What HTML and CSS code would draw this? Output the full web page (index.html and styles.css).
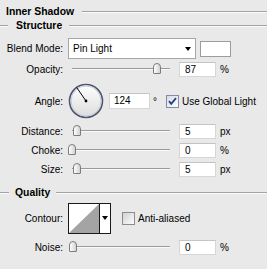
FILE: index.html
```html
<!DOCTYPE html>
<html lang="en">
<head>
    <meta charset="UTF-8">
    <meta name="viewport" content="width=device-width, initial-scale=1.0">
    <title>Inner Shadow</title>
    <link rel="stylesheet" href="styles.css">
</head>
<body>

    <div class="panel">
        <!-- Judul -->
        <div class="group-title">
            <span class="title-text">Inner Shadow</span>
            <span class="rule"></span>
        </div>

        <!-- Structure -->
        <div class="section-title">
            <span class="rule lead"></span>
            <span class="title-text">Structure</span>
            <span class="rule"></span>
        </div>

        <div class="row row-blend">
            <label class="lbl">Blend Mode:</label>
            <div class="select">Pin Light<span class="arrow"></span></div>
            <span class="swatch"></span>
        </div>

        <div class="row row-slider row-opacity">
            <label class="lbl">Opacity:</label>
            <div class="slider"><span class="track"></span><span class="thumb" style="left:85px"></span></div>
            <div class="num">87</div>
            <span class="unit">%</span>
        </div>

        <div class="row row-angle">
            <label class="lbl">Angle:</label>
            <svg class="dial" width="36" height="36" viewBox="0 0 36 36">
                <defs>
                    <linearGradient id="dialFill" x1="0" y1="0" x2="0" y2="1">
                        <stop offset="0" stop-color="#ffffff"/>
                        <stop offset="1" stop-color="#dcdcdc"/>
                    </linearGradient>
                </defs>
                <circle cx="18" cy="18" r="16.5" fill="url(#dialFill)" stroke="#4d5670" stroke-width="1.6"/>
                <circle cx="18" cy="18" r="15" fill="none" stroke="#c9ccd6" stroke-width="1"/>
                <line x1="18" y1="18" x2="8.6" y2="4.4" stroke="#000" stroke-width="1"/>
                <circle cx="18" cy="18" r="1.4" fill="#000"/>
            </svg>
            <div class="num num-angle">124</div>
            <span class="deg">°</span>
            <span class="check checked">
                <svg width="13" height="13" viewBox="0 0 13 13">
                    <defs>
                        <linearGradient id="boxFill" x1="0" y1="0" x2="1" y2="1">
                            <stop offset="0" stop-color="#d6d9e2"/>
                            <stop offset="1" stop-color="#ffffff"/>
                        </linearGradient>
                    </defs>
                    <rect x="0.5" y="0.5" width="12" height="12" fill="url(#boxFill)" stroke="#7f8ca8"/>
                    <path d="M3 6.2 L5.2 8.8 L10 3.2" fill="none" stroke="#263f86" stroke-width="1.8"/>
                </svg>
            </span>
            <span class="check-text">Use Global Light</span>
        </div>

        <div class="row row-slider row-distance">
            <label class="lbl">Distance:</label>
            <div class="slider"><span class="track"></span><span class="thumb" style="left:5px"></span></div>
            <div class="num">5</div>
            <span class="unit">px</span>
        </div>

        <div class="row row-slider row-gap">
            <label class="lbl">Choke:</label>
            <div class="slider"><span class="track"></span><span class="thumb" style="left:0px"></span></div>
            <div class="num">0</div>
            <span class="unit">%</span>
        </div>

        <div class="row row-slider row-gap">
            <label class="lbl">Size:</label>
            <div class="slider"><span class="track"></span><span class="thumb" style="left:5px"></span></div>
            <div class="num">5</div>
            <span class="unit">px</span>
        </div>

        <div class="divider"></div>

        <!-- Quality -->
        <div class="section-title section-quality">
            <span class="rule lead"></span>
            <span class="title-text">Quality</span>
            <span class="rule"></span>
        </div>

        <div class="row row-contour">
            <label class="lbl">Contour:</label>
            <div class="contour">
                <svg class="curve" width="30" height="29" viewBox="0 0 30 29">
                    <rect width="30" height="29" fill="#ffffff"/>
                    <polygon points="0,29 30,0 30,29" fill="#a4a4a4"/>
                </svg>
                <span class="contour-drop"><span class="arrow"></span></span>
            </div>
            <span class="check">
                <svg width="13" height="13" viewBox="0 0 13 13">
                    <defs>
                        <linearGradient id="boxFill2" x1="0" y1="0" x2="1" y2="1">
                            <stop offset="0" stop-color="#cfcfcf"/>
                            <stop offset="1" stop-color="#ffffff"/>
                        </linearGradient>
                    </defs>
                    <rect x="0.5" y="0.5" width="12" height="12" fill="url(#boxFill2)" stroke="#8c8c8c"/>
                </svg>
            </span>
            <span class="check-text">Anti-aliased</span>
        </div>

        <div class="row row-slider row-noise">
            <label class="lbl">Noise:</label>
            <div class="slider"><span class="track"></span><span class="thumb" style="left:1px"></span></div>
            <div class="num">0</div>
            <span class="unit">%</span>
        </div>
    </div>

</body>
</html>
```

FILE: styles.css
```css
body {
    margin: 0;
    background: #e9e9e9;
    font-family: "Liberation Sans", Arial, sans-serif;
    font-size: 10px;
    color: #000;
}
.panel {
    width: 267px;
    height: 269px;
    overflow: hidden;
}
.title-text {
    font-weight: bold;
    font-size: 10.4px;
    white-space: nowrap;
}
.rule {
    flex: 1;
    height: 0;
    border-top: 1px solid #a3a3a3;
    border-bottom: 1px solid #fbfbfb;
    margin-top: 1px;
}
.group-title {
    display: flex;
    align-items: center;
    height: 14px;
    margin-top: 4px;
    padding-left: 6px;
}
.group-title .rule {
    margin-left: 8px;
}
.section-title {
    display: flex;
    align-items: center;
    height: 14px;
}
.section-title .rule.lead {
    flex: none;
    width: 8px;
}
.section-title .title-text {
    margin: 0 7px 0 8px;
}
.section-quality {
    margin-top: 8px;
}
.section-quality .rule.lead {
    width: 9px;
}
.section-quality .title-text {
    margin: 0 6px 0 6px;
}
.row {
    display: flex;
    align-items: center;
}
.lbl {
    width: 63px;
    margin-right: 5px;
    text-align: right;
    white-space: nowrap;
}
.row-blend {
    height: 21px;
    margin-top: 6px;
}
.select {
    position: relative;
    box-sizing: border-box;
    width: 128px;
    height: 21px;
    line-height: 19px;
    padding-left: 4px;
    background: #fff;
    border: 1px solid #a6a6a6;
}
.arrow {
    position: absolute;
    width: 0;
    height: 0;
    border-left: 3.5px solid transparent;
    border-right: 3.5px solid transparent;
    border-top: 4px solid #000;
}
.select .arrow {
    right: 4px;
    top: 8px;
}
.swatch {
    box-sizing: border-box;
    width: 31px;
    height: 16px;
    margin-left: 4px;
    background: #fff;
    border: 1px solid #9c9c9c;
}
.row-slider {
    height: 16px;
}
.row-opacity {
    margin-top: 2px;
}
.row-distance {
    margin-top: 4px;
}
.row-gap {
    margin-top: 3px;
}
.row-noise {
    margin-top: 5px;
}
.slider {
    position: relative;
    width: 104px;
    height: 16px;
}
.track {
    position: absolute;
    left: 4px;
    right: 2px;
    top: 7px;
    height: 0;
    border-top: 1px solid #9a9a9a;
    border-bottom: 1px solid #fafafa;
}
.thumb {
    position: absolute;
    top: 2px;
    width: 6px;
    height: 9px;
    border: 1px solid #7c7c7c;
    border-radius: 4px 4px 1px 1px;
    background: linear-gradient(to right, #ffffff, #d2d2d2);
}
.num {
    box-sizing: border-box;
    width: 37px;
    height: 15px;
    line-height: 13px;
    margin-left: 7px;
    padding-left: 5px;
    background: #fff;
    border: 1px solid #d6d6d6;
    border-top-color: #c4c4c4;
}
.unit {
    margin-left: 4px;
}
.row-angle {
    height: 36px;
    margin-top: 6px;
}
.dial {
    display: block;
}
.num-angle {
    width: 41px;
    height: 16px;
    margin-left: 5px;
    padding-left: 4px;
}
.deg {
    margin-left: 3px;
    font-size: 10px;
}
.check {
    display: flex;
    margin-left: 9px;
}
.check-text {
    margin-left: 3px;
    white-space: nowrap;
}
.row-contour {
    height: 31px;
    margin-top: 4px;
}
.contour {
    display: flex;
    box-sizing: border-box;
    width: 43px;
    height: 31px;
    border: 1px solid #1a1a1a;
    background: #fff;
}
.curve {
    display: block;
}
.contour-drop {
    position: relative;
    flex: 1;
    border-left: 1px solid #1a1a1a;
}
.contour-drop .arrow {
    left: 2px;
    top: 12px;
}
.row-contour .check {
    margin-left: 11px;
}
```
